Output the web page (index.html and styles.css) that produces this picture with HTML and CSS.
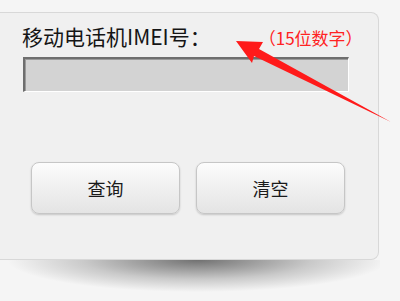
FILE: index.html
```html
<!DOCTYPE html>
<html lang="zh-CN">
<head>
    <meta charset="UTF-8">
    <meta name="viewport" content="width=device-width, initial-scale=1.0">
    <title>IMEI查询</title>
    <link rel="stylesheet" href="styles.css">
</head>
<body>
    <div class="panel">
        <div class="header">
            <span class="label">移动电话机IMEI号：</span>
            <span class="hint">（15位数字）</span>
        </div>

        <div class="imei-input"></div>

        <div class="actions">
            <button class="btn">查询</button>
            <button class="btn">清空</button>
        </div>

        <!-- 红色指示箭头 -->
        <svg class="arrow" width="170" height="105" viewBox="0 0 170 105">
            <polygon points="6,16 33,17 29,24 161,97 24,31 22,38" fill="#ff1a1a"/>
        </svg>
    </div>
    <div class="panel-shadow"></div>
</body>
</html>
```

FILE: styles.css
```css
* {
    margin: 0;
    padding: 0;
    box-sizing: border-box;
}

body {
    font-family: "Noto Sans CJK SC", "Noto Sans", sans-serif;
    background: #f5f5f5;
    width: 400px;
    height: 301px;
    overflow: hidden;
    padding-top: 12px;
}

.panel {
    position: relative;
    width: 379px;
    height: 248px;
    background: #f0f0f0;
    border: 1px solid #d8d8d8;
    border-left: none;
    border-radius: 0 8px 8px 0;
}

.header {
    display: flex;
    align-items: baseline;
    padding: 9px 0 0 22px;
    height: 38px;
}

.label {
    font-size: 21px;
    line-height: 28px;
    color: #151515;
}

.hint {
    margin-left: 48px;
    font-size: 17px;
    color: #ff2222;
}

.imei-input {
    margin: 6px 0 0 23px;
    width: 326px;
    height: 35px;
    background: #d3d3d3;
    border-top: 2px solid #6e6e6e;
    border-left: 2px solid #6e6e6e;
    border-right: 1px solid #fff;
    border-bottom: 1px solid #fff;
    box-shadow: inset 1px 1px 0 #9a9a9a;
}

.actions {
    display: flex;
    gap: 16px;
    margin: 70px 0 0 31px;
}

.btn {
    width: 149px;
    height: 52px;
    font-family: inherit;
    font-size: 18px;
    color: #1a1a1a;
    border: 1px solid #c6c6c6;
    border-radius: 8px;
    background: linear-gradient(#fcfcfc, #e4e4e4);
    box-shadow: 0 1px 2px rgba(0, 0, 0, 0.18);
    cursor: pointer;
}

.arrow {
    position: absolute;
    left: 230px;
    top: 12px;
    overflow: visible;
}

.panel-shadow {
    width: 380px;
    height: 32px;
    background: radial-gradient(ellipse 190px 32px at 52% 0, rgba(90, 90, 90, 0.85), rgba(120, 120, 120, 0.35) 60%, rgba(245, 245, 245, 0) 100%);
}
```
